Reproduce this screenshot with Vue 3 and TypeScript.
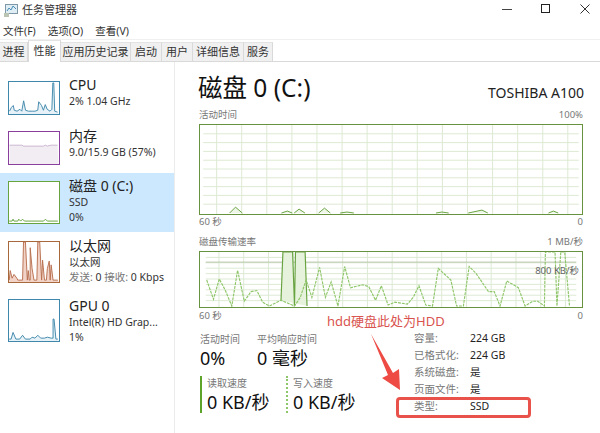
<script setup lang="ts">
import { computed } from 'vue'

type Pt = [number, number]

const toPoints = (pts: Pt[]): string => pts.map((p) => p.join(',')).join(' ')

const menus = ['文件(F)', '选项(O)', '查看(V)']
const tabs = [
  { name: '进程', width: 28 },
  { name: '性能', width: 33, active: true },
  { name: '应用历史记录', width: 70 },
  { name: '启动', width: 31 },
  { name: '用户', width: 31 },
  { name: '详细信息', width: 51 },
  { name: '服务', width: 29 },
]

const cpuLine: Pt[] = [[0, 31], [2, 27], [4, 25], [5, 30], [8, 31], [11, 29], [13, 31], [15, 20], [17, 30], [20, 31], [24, 31], [27, 31], [30, 30], [31, 21], [34, 25], [36, 30], [38, 24], [40, 29], [43, 31], [45, 29], [46, 1], [47, 1], [48, 31], [51, 32]]
const memLine: Pt[] = [[0, 14], [13, 14], [15, 15], [36, 15], [38, 14], [40, 15], [44, 14], [51, 14]]
const diskLine: Pt[] = [[0, 41], [3, 41], [4, 39], [5, 41], [9, 41], [10, 39], [12, 41], [14, 39], [16, 41], [36, 41], [38, 39], [40, 41], [51, 41]]
const netBack: Pt[] = [[0, 40], [1, 30], [3, 38], [5, 34], [8, 38], [9, 40], [14, 40], [15, 0], [17, 0], [19, 40], [20, 30], [21, 40], [22, 40], [22, 6], [24, 28], [26, 40], [29, 40], [30, 0], [32, 0], [34, 40], [35, 19], [37, 40], [39, 40], [40, 28], [42, 20], [43, 40], [44, 24], [46, 40], [51, 40]]
const gpuLine: Pt[] = [[0, 41], [2, 41], [4, 34], [7, 41], [11, 41], [14, 37], [17, 41], [22, 41], [24, 39], [27, 40], [30, 37], [33, 40], [37, 40], [40, 39], [44, 40], [46, 40], [46, 20], [47, 20], [49, 41], [51, 41]]

const items = [
  { name: 'CPU', lines: ['2% 1.04 GHz'], height: 51, thumbH: 34, color: '#3f87ab', fill: '#e6f2f7', stroke: '#3f87ab', line: cpuLine },
  { name: '内存', lines: ['9.0/15.9 GB (57%)'], height: 50, thumbH: 34, color: '#8b3f9c', fill: '#f1edf2', stroke: '#c9b3cf', line: memLine },
  { name: '磁盘 0 (C:)', lines: ['SSD', '0%'], height: 59, thumbH: 43, color: '#67a33f', fill: '#ffffff', stroke: '#67a33f', line: diskLine, active: true },
  { name: '以太网', lines: ['以太网'], net: true, height: 59, thumbH: 42, color: '#a7683c', fill: '#f2d3c8', stroke: '#b8704f', line: netBack },
  { name: 'GPU 0', lines: ['Intel(R) HD Grap...', '1%'], height: 59, thumbH: 43, color: '#3f87ab', fill: '#e6f2f7', stroke: '#3f87ab', line: gpuLine },
]

function areaOf(line: Pt[], h: number): string {
  return toPoints([[0, h], ...line, [52, h]])
}

const W = 384
const activeGridX = computed(() => Array.from({ length: 15 }, (_, i) => 13.7 + i * 25.65))
const activeGridY = computed(() => Array.from({ length: 9 }, (_, i) => 9 * (i + 1)))
const rateGridY = computed(() => Array.from({ length: 9 }, (_, i) => 5.6 * (i + 1)))

const activeBumps: Pt[][] = [
  [[27, 90], [33, 84], [40, 90]],
  [[80, 90], [86, 88], [91, 90]],
  [[93, 90], [98, 86], [104, 90]],
  [[118, 90], [124, 85], [130, 90]],
  [[140, 90], [147, 89], [154, 90]],
  [[238, 90], [244, 89], [251, 90]],
  [[271, 90], [285, 87], [291, 90]],
  [[353, 90], [358, 88], [363, 90]],
]

const writeRate: Pt[] = [[1, 29], [8, 49], [14, 28], [20, 39], [27, 56], [33, 19], [40, 51], [47, 41], [53, 40], [59, 52], [66, 56], [78, 50], [92, 56], [98, 47], [104, 29], [110, 47], [118, 16], [124, 47], [130, 31], [137, 56], [144, 15], [150, 37], [163, 34], [169, 36], [176, 50], [182, 35], [189, 55], [196, 52], [209, 54], [215, 47], [221, 35], [228, 55], [235, 56], [241, 17], [254, 29], [260, 56], [267, 56], [273, 15], [280, 22], [293, 41], [299, 41], [305, 56], [312, 30], [324, 37], [331, 56], [339, 51], [344, 51], [351, 56], [352, 0], [362, 0], [364, 56], [368, 0], [372, 0], [377, 56]]
const readRate: Pt[] = [[78, 50], [80, 0], [90, 0], [92, 56], [93, 0], [103, 0], [105, 56]]

const specs = [
  ['容量:', '224 GB'],
  ['已格式化:', '224 GB'],
  ['系统磁盘:', '是'],
  ['页面文件:', '是'],
  ['类型:', 'SSD'],
]
</script>

<template>
  <div class="window">
    <header class="titlebar">
      <svg class="app-icon" width="16" height="16" viewBox="0 0 16 16">
        <rect x="2.5" y="2.5" width="12" height="9" fill="#dfeef5" stroke="#7f97a6" />
        <polyline points="4,9 6,6 8,8 10,4 13,7" fill="none" stroke="#4b8db5" />
        <rect x="1" y="11" width="5" height="4" fill="#b9c4b2" />
      </svg>
      <span class="app-name">任务管理器</span>
      <div class="controls">
        <svg width="10" height="10" viewBox="0 0 10 10"><line x1="0" y1="5.5" x2="10" y2="5.5" stroke="#444" /></svg>
        <svg width="10" height="10" viewBox="0 0 10 10"><rect x="0.5" y="0.5" width="8" height="8" fill="none" stroke="#222" /></svg>
        <svg width="10" height="10" viewBox="0 0 10 10"><path d="M0.5 0.5 L9.5 9.5 M9.5 0.5 L0.5 9.5" stroke="#333" fill="none" /></svg>
      </div>
    </header>

    <nav class="menubar">
      <span v-for="m in menus" :key="m">{{ m }}</span>
    </nav>

    <div class="tabbar">
      <span
        v-for="t in tabs"
        :key="t.name"
        class="tab"
        :class="{ active: t.active }"
        :style="{ width: t.width + 'px' }"
      >{{ t.name }}</span>
    </div>

    <div class="body">
      <aside class="sidebar">
        <div
          v-for="item in items"
          :key="item.name"
          class="item"
          :class="{ active: item.active }"
          :style="{ height: item.height + 'px' }"
        >
          <svg
            class="thumb"
            width="52"
            :height="item.thumbH"
            :viewBox="`0 0 52 ${item.thumbH}`"
            :style="{ borderColor: item.color }"
          >
            <polygon :points="areaOf(item.line, item.thumbH)" :fill="item.fill" />
            <polyline :points="toPoints(item.line)" fill="none" :stroke="item.stroke" stroke-width="1" />
          </svg>
          <div class="item-text">
            <div class="item-name">{{ item.name }}</div>
            <div v-for="l in item.lines" :key="l" class="item-sub">{{ l }}</div>
            <div v-if="item.net" class="item-sub">
              <span class="muted">发送:</span> 0 <span class="muted">接收:</span> 0 Kbps
            </div>
          </div>
        </div>
      </aside>

      <main class="main">
        <div class="heading">
          <h1>磁盘 0 (C:)</h1>
          <span class="model">TOSHIBA A100</span>
        </div>

        <div class="axis top"><span>活动时间</span><span>100%</span></div>
        <svg class="chart" :width="W" height="91" :viewBox="`0 0 ${W} 91`">
          <line v-for="y in activeGridY" :key="y" x1="0" :x2="W" :y1="y" :y2="y" class="grid" />
          <line v-for="x in activeGridX" :key="x" :x1="x" :x2="x" y1="0" y2="91" class="grid" />
          <polyline
            v-for="(b, i) in activeBumps"
            :key="i"
            :points="toPoints(b)"
            fill="#eef6e8"
            stroke="#67a33f"
          />
        </svg>
        <div class="axis bottom"><span>60 秒</span><span>0</span></div>

        <div class="axis top second"><span>磁盘传输速率</span><span>1 MB/秒</span></div>
        <div class="rate-wrap">
          <svg class="chart" :width="W" height="57" :viewBox="`0 0 ${W} 57`">
            <line v-for="y in rateGridY" :key="y" x1="0" :x2="W" :y1="y" :y2="y" class="grid" />
            <line v-for="x in activeGridX" :key="x" :x1="x" :x2="x" y1="0" y2="57" class="grid" />
            <line x1="0" :x2="W" y1="10.5" y2="10.5" stroke="#b5c4a8" />
            <polygon :points="toPoints(readRate)" fill="#e6f2dc" />
            <polyline :points="toPoints(readRate)" fill="none" stroke="#67a33f" stroke-width="1.2" />
            <polyline :points="toPoints(writeRate)" fill="none" stroke="#8fc66a" stroke-width="1.2" stroke-dasharray="3 1" />
          </svg>
          <span class="rate-mark">800 KB/秒</span>
        </div>
        <div class="axis bottom"><span>60 秒</span><span>0</span></div>

        <section class="stats">
          <div class="stats-left">
            <div class="stat-row">
              <div class="stat first">
                <div class="label">活动时间</div>
                <div class="value">0%</div>
              </div>
              <div class="stat">
                <div class="label">平均响应时间</div>
                <div class="value">0 毫秒</div>
              </div>
            </div>
            <div class="stat-row io">
              <div class="stat bar read">
                <div class="label">读取速度</div>
                <div class="value">0 KB/秒</div>
              </div>
              <div class="stat bar write">
                <div class="label">写入速度</div>
                <div class="value">0 KB/秒</div>
              </div>
            </div>
          </div>
          <dl class="specs">
            <template v-for="s in specs" :key="s[0]">
              <dt>{{ s[0] }}</dt>
              <dd>{{ s[1] }}</dd>
            </template>
          </dl>
        </section>
      </main>
    </div>

    <!-- 截图上的红色标注 -->
    <div class="note">hdd硬盘此处为HDD</div>
    <svg class="note-arrow" width="40" height="64" viewBox="0 0 40 64">
      <polygon points="2,1 24,40 30,36 31,57 13,45 19,42" fill="#ee4b45" />
    </svg>
    <div class="note-box"></div>
  </div>
</template>

<style>
html,
body {
  margin: 0;
  background: #fff;
}
</style>

<style scoped>
.window {
  position: relative;
  width: 600px;
  height: 433px;
  overflow: hidden;
  display: flex;
  flex-direction: column;
  background: #fff;
  color: #1a1a1a;
  font-family: 'Noto Sans', 'Noto Sans CJK SC', sans-serif;
}

.titlebar {
  height: 19px;
  display: flex;
  align-items: center;
  flex: none;
}

.app-icon {
  margin-left: 3px;
  margin-top: 1px;
}

.app-name {
  margin-left: 3px;
  font-size: 11px;
  line-height: 19px;
  color: #333;
}

.controls {
  margin-left: auto;
  display: flex;
  gap: 29px;
  padding-right: 10px;
  margin-top: -1px;
}

.menubar {
  height: 19px;
  margin-top: 2px;
  display: flex;
  gap: 12px;
  padding-left: 3px;
  align-items: center;
  font-size: 10.5px;
  color: #333;
  border-bottom: 1px solid #f0f0f0;
  box-sizing: border-box;
  flex: none;
}

.tabbar {
  height: 22px;
  display: flex;
  align-items: flex-end;
  border-bottom: 1px solid #d9d9d9;
  box-sizing: border-box;
  flex: none;
}

.tab {
  height: 19px;
  box-sizing: border-box;
  background: #f0f0f0;
  border-right: 1px solid #d9d9d9;
  border-top: 1px solid #e3e3e3;
  font-size: 11px;
  line-height: 18px;
  text-align: center;
  color: #333;
}

.tab.active {
  height: 22px;
  background: #fff;
  margin-bottom: -1px;
  line-height: 19px;
  border-left: 1px solid #d9d9d9;
}

.body {
  flex: 1;
  display: flex;
  min-height: 0;
}

.sidebar {
  width: 174px;
  padding-top: 10px;
  border-right: 1px solid #ececec;
  margin-right: 2px;
}

.item {
  display: flex;
  align-items: center;
  padding-left: 8px;
  box-sizing: border-box;
}

.item.active {
  background: #cce8ff;
}

.thumb {
  box-sizing: border-box;
  border: 1px solid;
  background: #fff;
  flex: none;
}

.item-text {
  margin-left: 9px;
  align-self: flex-start;
  padding-top: 4px;
  white-space: nowrap;
}

.item:nth-child(4) .item-text {
  padding-top: 5px;
}

.item:nth-child(5) .item-text {
  padding-top: 6px;
}

.item-name {
  font-size: 14px;
  line-height: 18px;
  color: #222;
}

.item-sub {
  font-size: 10.5px;
  line-height: 15px;
  color: #333;
}

.muted {
  color: #777;
}

.main {
  flex: 1;
  min-width: 0;
  padding: 8px 16px 0 22px;
}

.heading {
  display: flex;
  justify-content: space-between;
  align-items: center;
  height: 36px;
}

h1 {
  margin: 0 0 0 -1px;
  font-size: 24.5px;
  font-weight: 400;
  line-height: 36px;
  color: #111;
}

.model {
  font-size: 14px;
  color: #222;
  margin-top: 8px;
}

.axis {
  display: flex;
  justify-content: space-between;
  width: 384px;
  font-size: 9.5px;
  color: #777;
  line-height: 14px;
}

.axis.top {
  margin-top: 2px;
  height: 16px;
}

.axis.bottom {
  height: 14px;
}

.axis.second {
  margin-top: 6px;
}

.rate-wrap + .axis.bottom {
  margin-top: 1px;
}

.chart {
  display: block;
  box-sizing: border-box;
  border: 1px solid #67923f;
  background: #fff;
}

.grid {
  stroke: #dce9d2;
  stroke-width: 1;
}

.rate-wrap {
  position: relative;
  width: 384px;
}

.rate-mark {
  position: absolute;
  top: 13px;
  right: 4px;
  font-size: 9.5px;
  line-height: 14px;
  color: #666;
}

.stats {
  display: flex;
  margin-top: 9px;
}

.stats-left {
  width: 215px;
  flex: none;
  padding-left: 1px;
  box-sizing: border-box;
}

.stat-row {
  display: flex;
}

.stat.first {
  width: 57px;
}

.label {
  font-size: 10px;
  line-height: 14px;
  color: #777;
}

.value {
  font-size: 18px;
  line-height: 25px;
  color: #111;
  white-space: nowrap;
}

.io {
  margin-top: 5px;
}

.stat.bar {
  padding-left: 5px;
  height: 37px;
  box-sizing: border-box;
}

.stat.read {
  width: 86px;
  border-left: 2px solid #5ea32a;
}

.stat.write {
  border-left: 2px dotted #8fc66a;
}

.specs {
  margin: -2px 0 0;
  display: grid;
  grid-template-columns: 56px 1fr;
  grid-auto-rows: 17px;
  font-size: 10.5px;
  line-height: 17px;
}

.specs dt {
  color: #777;
}

.specs dd {
  margin: 0;
  color: #222;
}

.note {
  position: absolute;
  left: 327px;
  top: 312px;
  font-size: 13px;
  line-height: 18px;
  color: #d9534f;
  white-space: nowrap;
}

.note-arrow {
  position: absolute;
  left: 369px;
  top: 333px;
}

.note-box {
  position: absolute;
  left: 396px;
  top: 397px;
  width: 135px;
  height: 21px;
  box-sizing: border-box;
  border: 3px solid #e8524a;
  border-radius: 4px;
}
</style>
